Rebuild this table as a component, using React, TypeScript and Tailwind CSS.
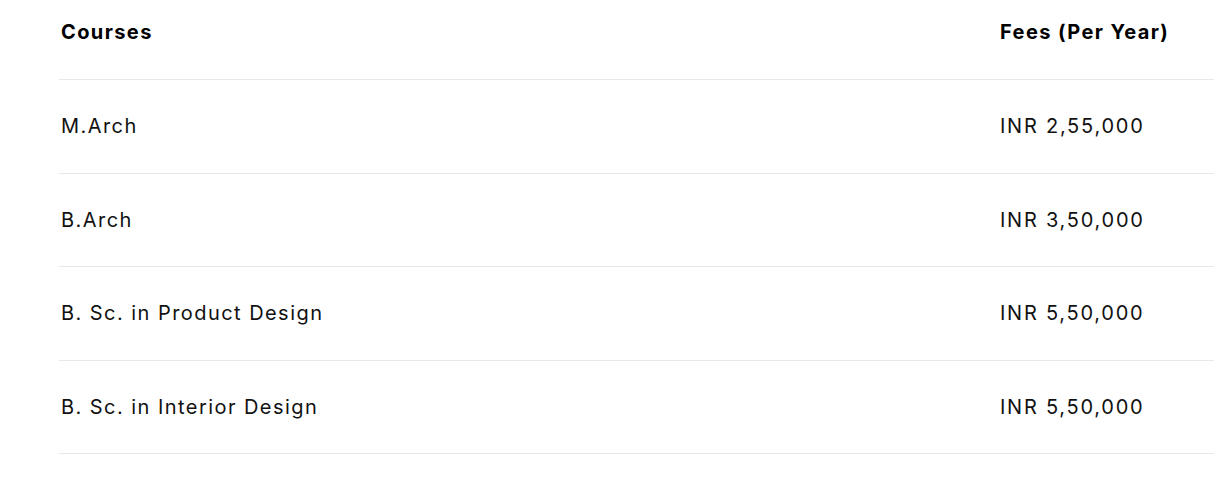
export default function App() {
  const rows = [
    ["M.Arch", "INR 2,55,000"],
    ["B.Arch", "INR 3,50,000"],
    ["B. Sc. in Product Design", "INR 5,50,000"],
    ["B. Sc. in Interior Design", "INR 5,50,000"],
  ];
  return (
    <div className="min-h-[483px] w-full overflow-hidden bg-white pl-[59px] text-[#111]" style={{ fontFamily: "Inter, 'Noto Sans', sans-serif" }}>
      <div className="grid grid-cols-[941px_1fr] border-b border-[#e8e8e8] h-[80px]">
        <div className="pl-[2px] pt-[20px] text-[20px] font-bold leading-[24px] tracking-[1.4px] text-black">Courses</div>
        <div className="pt-[20px] text-[20px] font-bold leading-[24px] tracking-[1.4px] text-black">Fees (Per Year)</div>
      </div>
      {rows.map(([c, f]) => (
        <div key={c} className="grid h-[93.5px] grid-cols-[941px_1fr] items-center border-b border-[#e8e8e8]">
          <div className="pl-[2px] text-[20px] leading-[24px] tracking-[1.45px]">{c}</div>
          <div className="text-[20px] leading-[24px] tracking-[1.75px]">{f}</div>
        </div>
      ))}
    </div>
  );
}
